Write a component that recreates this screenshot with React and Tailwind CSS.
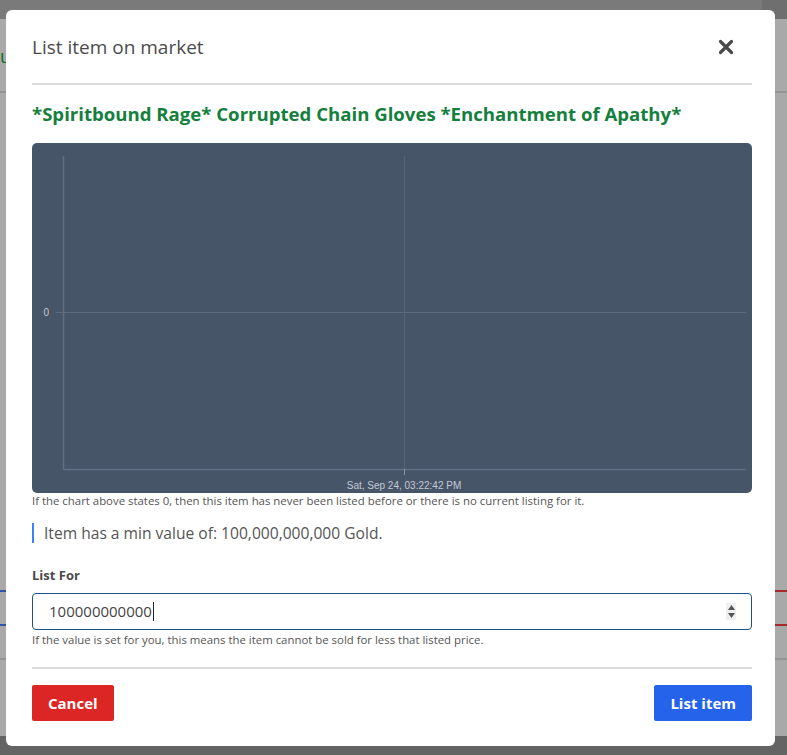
import React from "react";

const font = { fontFamily: '"Open Sans", "Noto Sans", sans-serif' };

const Chart = () => {
  return (
    <div className="relative mt-[16px] h-[350px] w-full rounded-[5px] bg-[#475569]">
      <svg width="720" height="350" className="block">
        {/* grid */}
        <line x1="24" y1="169.5" x2="714" y2="169.5" stroke="#5b6b80" strokeWidth="1" />
        <line x1="372.5" y1="13" x2="372.5" y2="332" stroke="#56657a" strokeWidth="1" />
        {/* axes */}
        <line x1="31.5" y1="13" x2="31.5" y2="326.5" stroke="#5f6e82" strokeWidth="1.5" />
        <line x1="31" y1="326.5" x2="714" y2="326.5" stroke="#5f6e82" strokeWidth="1.5" />
        <line x1="372.5" y1="326" x2="372.5" y2="332" stroke="#8893a3" strokeWidth="1" />
        <text x="17" y="173" fill="#c4cad3" fontSize="10" fontFamily='"Liberation Sans", Arial, sans-serif' textAnchor="end">
          0
        </text>
        <text x="372" y="346" fill="#c4cad3" fontSize="10" fontFamily='"Liberation Sans", Arial, sans-serif' textAnchor="middle">
          Sat, Sep 24, 03:22:42 PM
        </text>
      </svg>
    </div>
  );
};

const App = () => {
  return (
    <div className="relative h-[755px] w-[787px] overflow-hidden bg-[#a9a9a9]" style={font}>
      {/* page behind the dialog */}
      <div className="flex h-[19px]">
        <div className="w-[762px] bg-[#7a7a7a]" />
        <div className="flex-1 bg-[#6f6f6f]" />
      </div>
      <div className="h-[72px] pt-[25px] text-[18px] leading-[24px] text-[#0f6b2e]">
        <span>up</span>
      </div>
      <div className="h-[2px] bg-[#949494]" />
      <div className="h-[497px]" />
      <div className="flex h-[2px]">
        <div className="w-[20px] bg-[#2d55a5]" />
        <div className="flex-1" />
        <div className="w-[20px] bg-[#a52a2a]" />
      </div>
      <div className="h-[32px]" />
      <div className="flex h-[2px]">
        <div className="w-[20px] bg-[#2d55a5]" />
        <div className="flex-1" />
        <div className="w-[20px] bg-[#a52a2a]" />
      </div>
      <div className="h-[32px]" />
      <div className="h-[2px] bg-[#949494]" />
      <div className="h-[76px]" />
      <div className="h-[20px] bg-[#646464]" />

      {/* dialog */}
      <div className="absolute left-[6px] top-[10px] h-[736px] w-[769px] rounded-[6px] bg-white pl-[26px] pr-[23px]">
        <div className="flex items-center justify-between pt-[24px] pb-[23px]">
          <h2 className="text-[19px] leading-[26px] text-[#4b4b4b]">List item on market</h2>
          <svg width="16" height="16" viewBox="0 0 16 16" className="mr-[18px]">
            <path d="M2.5 2.5 L13.5 13.5 M13.5 2.5 L2.5 13.5" stroke="#4a4a4a" strokeWidth="3.2" strokeLinecap="round" />
          </svg>
        </div>
        <div className="h-[2px] bg-[#dcdcdc]" />

        <h3 className="mt-[16px] text-[18.6px] font-bold leading-[26px] text-[#15803d]">
          *Spiritbound Rage* Corrupted Chain Gloves *Enchantment of Apathy*
        </h3>

        <Chart />
        <p className="text-[11.4px] leading-[15px] text-[#555]">
          If the chart above states 0, then this item has never been listed before or there is no current listing for it.
        </p>

        <div className="mt-[15px] border-l-2 border-[#3b82f6] pl-[10px] text-[15.6px] leading-[20px] text-[#555]">
          Item has a min value of: 100,000,000,000 Gold.
        </div>

        <label className="mt-[23px] block text-[13px] font-bold leading-[18px] text-[#4a4a4a]">List For</label>
        <div className="mt-[9px] flex h-[37px] items-center rounded-[4px] border border-[#1e4f8a] pl-[16px] pr-[15px]">
          <span className="text-[15px] text-[#444]">100000000000</span>
          <span className="ml-[1px] h-[19px] w-px bg-[#222]" />
          <div className="ml-auto flex h-[17px] w-[10px] flex-col items-center justify-center gap-[3px] bg-[#efefef]">
            <svg width="7" height="5" viewBox="0 0 7 5"><path d="M3.5 0 L7 5 L0 5 Z" fill="#555" /></svg>
            <svg width="7" height="5" viewBox="0 0 7 5"><path d="M0 0 L7 0 L3.5 5 Z" fill="#555" /></svg>
          </div>
        </div>
        <p className="mt-[2px] text-[11.4px] leading-[15px] text-[#555]">
          If the value is set for you, this means the item cannot be sold for less that listed price.
        </p>

        <div className="mt-[20px] h-[2px] bg-[#dcdcdc]" />

        <div className="mt-[16px] flex items-center justify-between">
          <button className="h-[36px] rounded-[2px] bg-[#dc2626] px-[16px] text-[15px] font-bold text-white">Cancel</button>
          <button className="h-[36px] rounded-[2px] bg-[#2563eb] px-[16px] text-[15px] font-bold text-white">List item</button>
        </div>
      </div>
    </div>
  );
};

export default App;
